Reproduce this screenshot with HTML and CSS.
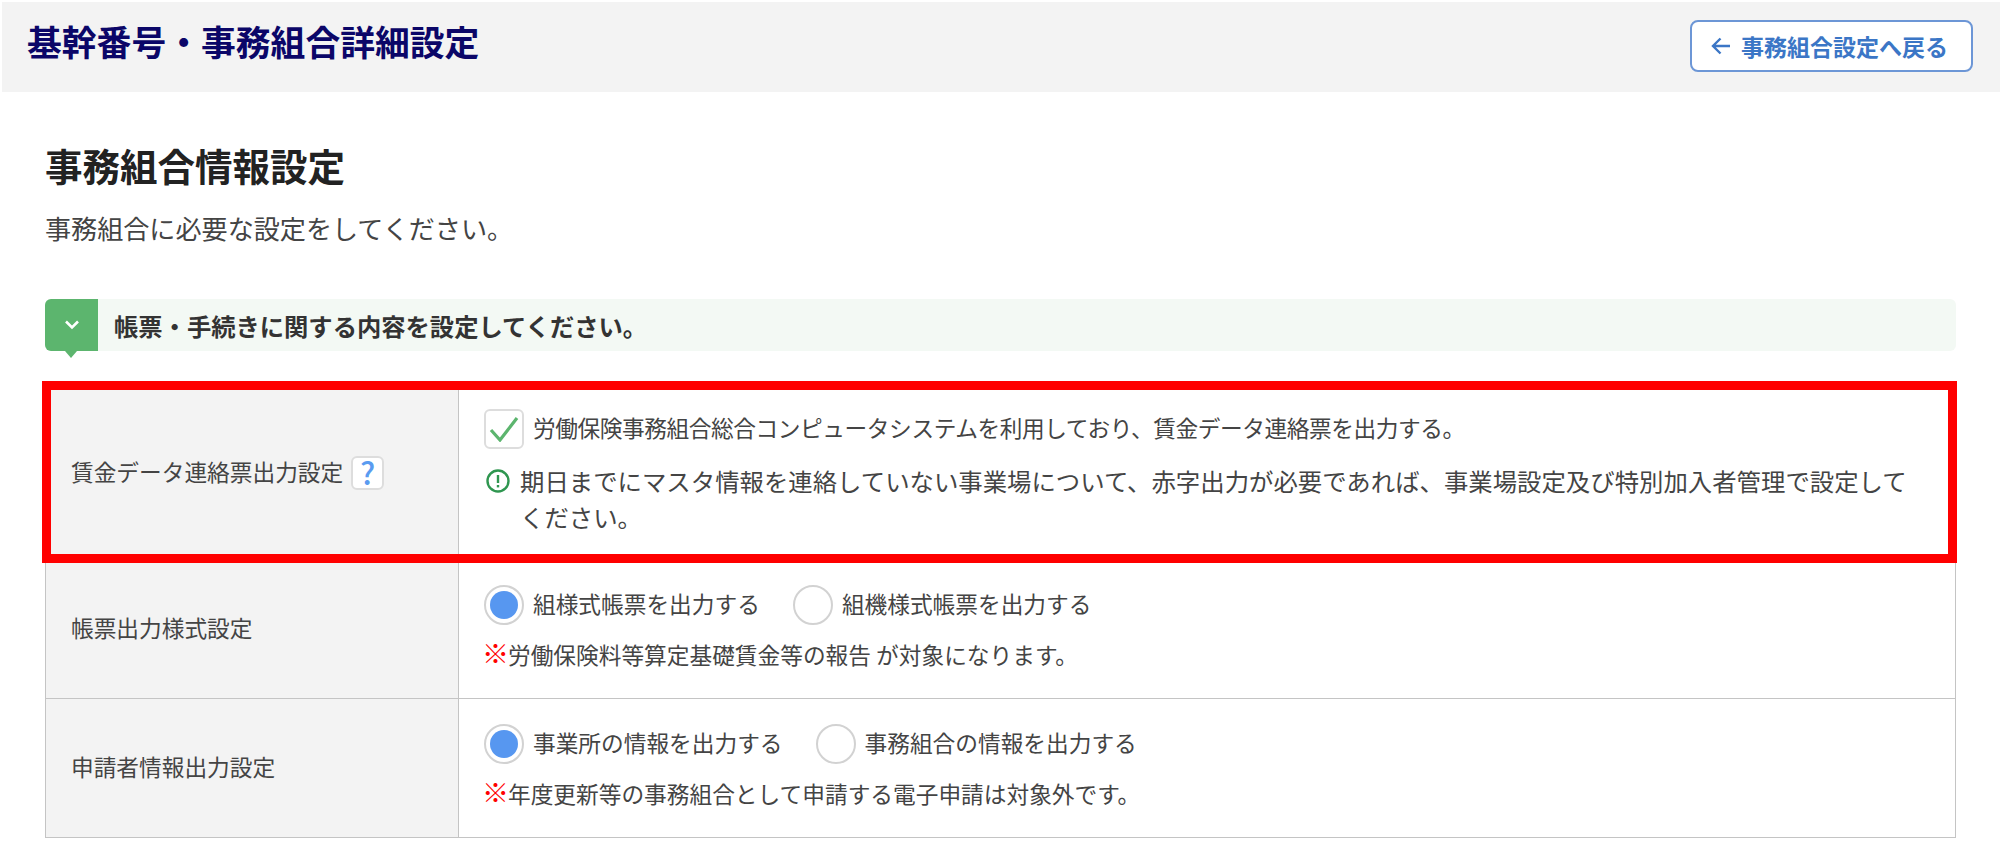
FILE: index.html
```html
<!DOCTYPE html>
<html lang="ja">
  <head>
    <meta charset="UTF-8" />
    <title>基幹番号・事務組合詳細設定</title>
    <link rel="stylesheet" href="styles.css">
  </head>
  <body>
    <header class="page-head">
      <h1>基幹番号・事務組合詳細設定</h1>
      <a href="#" class="back-btn">
        <svg width="20" height="18" viewBox="0 0 20 18" fill="none" stroke="currentColor" stroke-width="2.4">
          <path d="M19 9H2M9.5 1.5L2 9l7.5 7.5" />
        </svg>
        事務組合設定へ戻る
      </a>
    </header>
    <main class="content">
      <h2>事務組合情報設定</h2>
      <p class="lead">事務組合に必要な設定をしてください。</p>

      <div class="section-bar">
        <span class="section-tab">
          <svg width="16" height="10" viewBox="0 0 16 10" fill="none" stroke="#fff" stroke-width="2.6">
            <path d="M2 1.5l6 6 6-6" />
          </svg>
        </span>
        <span class="section-text">帳票・手続きに関する内容を設定してください。</span>
      </div>

      <div class="settings">
        <div class="row row-first">
          <div class="label">賃金データ連絡票出力設定 <span class="help">?</span></div>
          <div class="body">
            <div class="choices">
              <span class="check">
                <svg width="30" height="26" viewBox="0 0 30 26" fill="none" stroke="#5cb56e" stroke-width="3.2">
                  <path d="M2 14l9 10L28 2" />
                </svg>
              </span>
              <span class="choice-text tight">労働保険事務組合総合コンピュータシステムを利用しており、賃金データ連絡票を出力する。</span>
            </div>
            <div class="info">
              <svg class="info-icon" width="24" height="24" viewBox="0 0 24 24" fill="none">
                <circle cx="12" cy="12" r="10.5" stroke="#2f9650" stroke-width="2.4" />
                <path d="M12 6v8" stroke="#2f9650" stroke-width="2.4" />
                <path d="M12 16v2.4" stroke="#2f9650" stroke-width="2.4" />
              </svg>
              <span>期日までにマスタ情報を連絡していない事業場について、赤字出力が必要であれば、事業場設定及び特別加入者管理で設定してください。</span>
            </div>
          </div>
        </div>

        <div class="row">
          <div class="label">帳票出力様式設定</div>
          <div class="body">
            <div class="choices">
              <span class="radio on"></span><span class="choice-text">組様式帳票を出力する</span>
              <span class="radio"></span><span class="choice-text">組機様式帳票を出力する</span>
            </div>
            <p class="note"><b>※</b>労働保険料等算定基礎賃金等の報告 が対象になります。</p>
          </div>
        </div>

        <div class="row">
          <div class="label">申請者情報出力設定</div>
          <div class="body">
            <div class="choices">
              <span class="radio on"></span><span class="choice-text">事業所の情報を出力する</span>
              <span class="radio"></span><span class="choice-text">事務組合の情報を出力する</span>
            </div>
            <p class="note"><b>※</b>年度更新等の事務組合として申請する電子申請は対象外です。</p>
          </div>
        </div>

        <div class="highlight"></div>
      </div>
    </main>
  </body>
</html>
```

FILE: styles.css
```css
* {
  margin: 0;
  padding: 0;
  box-sizing: border-box;
  font-family: "Noto Sans CJK JP", "Noto Sans", sans-serif;
}

body {
  background: #fff;
  color: #444;
  font-size: 22.7px;
  padding: 2px 0 0 2px;
  height: 865px;
  overflow: hidden;
}

.page-head {
  height: 90px;
  background: #f3f3f3;
  display: flex;
  align-items: center;
  justify-content: space-between;
  padding: 0 27px 0 25px;
}

.page-head h1 {
  font-size: 34.8px;
  font-weight: 700;
  color: #0b0668;
  line-height: 1;
  margin-top: -11px;
}

.back-btn {
  width: 283px;
  height: 52px;
  margin-top: -2px;
  background: #fff;
  border: 2px solid #6c96d6;
  border-radius: 8px;
  color: #3b76c6;
  font-weight: 700;
  font-size: 23px;
  text-decoration: none;
  display: flex;
  align-items: center;
  gap: 10px;
  padding-left: 19px;
}

.content {
  padding: 0 44px 0 43px;
}

.content h2 {
  font-size: 37.5px;
  font-weight: 700;
  color: #222;
  line-height: 50px;
  margin-top: 48px;
}

.lead {
  font-size: 26.1px;
  line-height: 36px;
  margin-top: 20px;
}

.section-bar {
  height: 52px;
  margin-top: 53px;
  background: #f3f9f4;
  border-radius: 6px;
  display: flex;
  align-items: center;
}

.section-tab {
  position: relative;
  width: 53px;
  height: 52px;
  background: #5cb56e;
  border-radius: 6px 0 0 6px;
  display: flex;
  align-items: center;
  justify-content: center;
}

.section-tab::after {
  content: "";
  position: absolute;
  left: 20px;
  bottom: -7px;
  border-left: 6px solid transparent;
  border-right: 6px solid transparent;
  border-top: 7px solid #5cb56e;
}

.section-text {
  margin-left: 16px;
  font-weight: 700;
  font-size: 24.3px;
  color: #333;
}

.settings {
  position: relative;
  margin-top: 35px;
  border: 1px solid #c4c4c4;
  border-bottom: 0;
}

.row {
  display: grid;
  grid-template-columns: 413px 1fr;
  height: 139px;
  border-bottom: 1px solid #c4c4c4;
}

.row-first {
  height: 173px;
}

.row-first .body {
  padding-top: 22px;
}

.label {
  background: #f3f3f3;
  border-right: 1px solid #c4c4c4;
  padding: 0 0 4px 25px;
  display: flex;
  align-items: center;
  gap: 8px;
}

.help {
  width: 33px;
  height: 34px;
  margin-top: 3px;
  background: #fff;
  border: 2px solid #ddd;
  border-radius: 6px;
  color: #5a9bf0;
  font-weight: 500;
  font-size: 31px;
  line-height: 28px;
  text-align: center;
}

.body {
  padding: 25px 40px 0 25px;
}

.choices {
  display: flex;
  align-items: center;
}

.check {
  width: 40px;
  height: 40px;
  margin-right: 9px;
  border: 2px solid #ddd;
  border-radius: 6px;
  display: flex;
  align-items: center;
  justify-content: center;
}

.radio {
  position: relative;
  width: 40px;
  height: 40px;
  margin-right: 9px;
  border: 2px solid #d2d2d2;
  border-radius: 50%;
  background: #fff;
}

.radio.on::after {
  content: "";
  position: absolute;
  top: 4px;
  left: 4px;
  width: 28px;
  height: 28px;
  border-radius: 50%;
  background: #5797f0;
}

.choice-text {
  margin: 0 33px 4px 0;
}

.tight {
  letter-spacing: -0.43px;
}

.info {
  display: flex;
  margin-top: 14px;
  font-size: 24.4px;
  line-height: 36px;
}

.info-icon {
  flex: none;
  margin: 6px 10px 0 2px;
}

.note {
  line-height: 36px;
  margin-top: 12px;
}

.note b {
  display: inline-block;
  width: 26px;
  color: #f00;
  font-weight: 700;
  font-size: 27px;
  line-height: 1;
  margin-left: -2px;
}

.highlight {
  position: absolute;
  top: -6px;
  left: -4px;
  right: -2px;
  height: 182px;
  border: 9px solid #f00;
  pointer-events: none;
}
```
